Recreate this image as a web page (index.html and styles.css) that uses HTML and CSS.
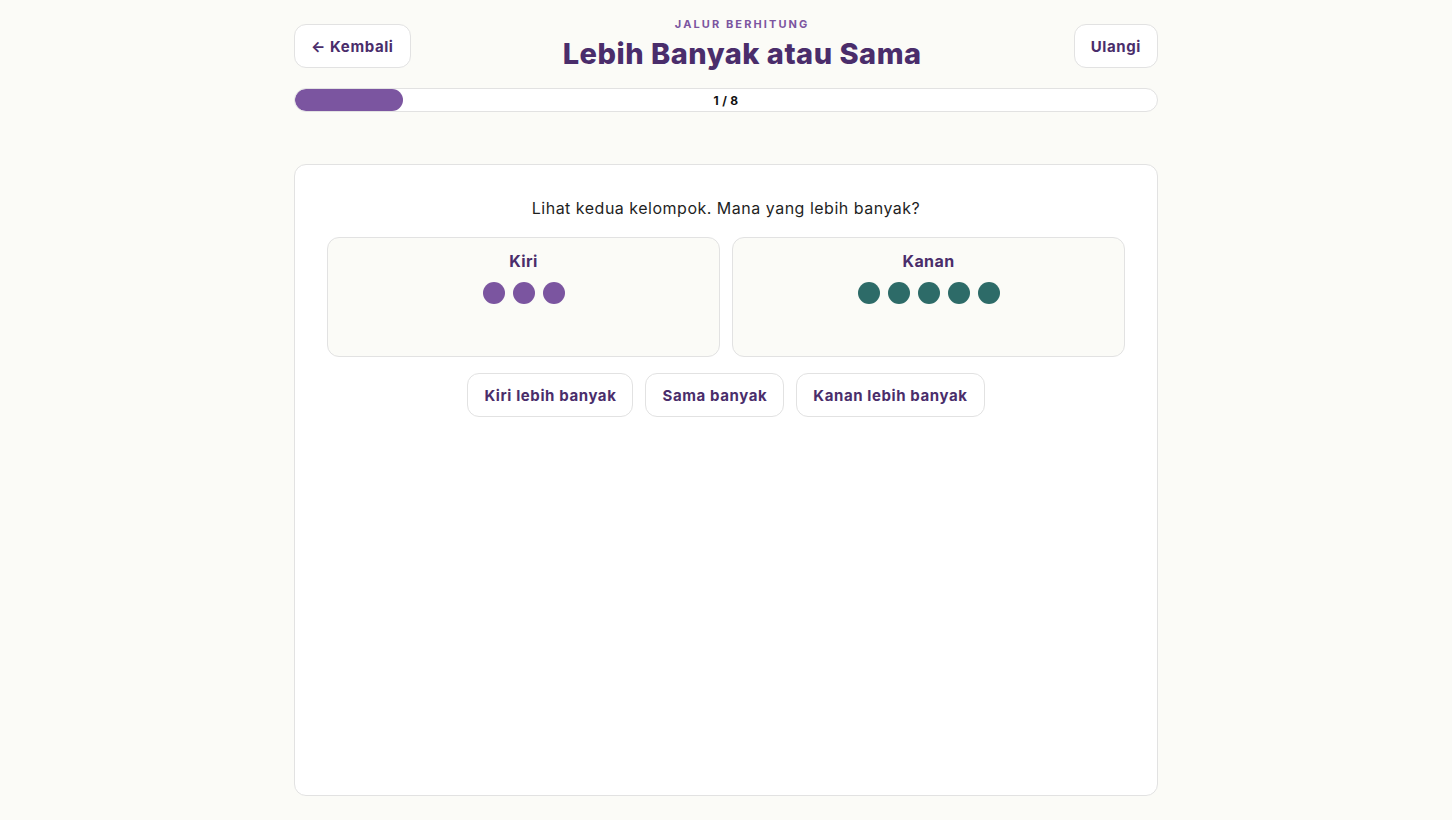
FILE: index.html
```html
<!DOCTYPE html>
<html lang="id">
<head>
<meta charset="utf-8">
<title>Lebih Banyak atau Sama</title>
<link rel="stylesheet" href="styles.css">
</head>
<body>
<div class="page">
  <header class="top">
    <button class="btn">← Kembali</button>
    <div class="heading">
      <div class="kicker">JALUR BERHITUNG</div>
      <h1 class="title">Lebih Banyak atau Sama</h1>
    </div>
    <button class="btn">Ulangi</button>
  </header>
  <div class="progress">
    <div class="progress-fill" style="width:12.5%"></div>
    <div class="progress-label">1 / 8</div>
  </div>
  <main class="card">
    <p class="prompt">Lihat kedua kelompok. Mana yang lebih banyak?</p>
    <div class="groups">
      <section class="group">
        <div class="group-title">Kiri</div>
        <div class="dots">
          <span class="dot purple"></span><span class="dot purple"></span><span class="dot purple"></span>
        </div>
      </section>
      <section class="group">
        <div class="group-title">Kanan</div>
        <div class="dots">
          <span class="dot teal"></span><span class="dot teal"></span><span class="dot teal"></span><span class="dot teal"></span><span class="dot teal"></span>
        </div>
      </section>
    </div>
    <div class="choices">
      <button class="btn">Kiri lebih banyak</button>
      <button class="btn">Sama banyak</button>
      <button class="btn">Kanan lebih banyak</button>
    </div>
  </main>
</div>
</body>
</html>
```

FILE: styles.css
```css
* { box-sizing: border-box; }
html, body { margin: 0; padding: 0; }
body {
  background: #fbfbf7;
  font-family: Inter, "Noto Sans", "DejaVu Sans", sans-serif;
  color: #1f1f1f;
}
.page {
  width: 864px;
  margin: 0 auto;
  padding-top: 16px;
}
.top {
  display: flex;
  justify-content: space-between;
  align-items: center;
}
.btn {
  font-family: inherit;
  font-size: 15px;
  font-weight: 700;
  letter-spacing: 0.6px;
  color: #4a2d6b;
  background: #fff;
  border: 1px solid #e2e2e2;
  border-radius: 12px;
  height: 44px;
  padding: 0 16px;
  cursor: pointer;
}
.heading {
  text-align: center;
}
.kicker {
  font-size: 11px;
  font-weight: 700;
  letter-spacing: 2.1px;
  color: #7b55a0;
  line-height: 16px;
}
.title {
  margin: 0;
  font-size: 29px;
  font-weight: 800;
  letter-spacing: 0.5px;
  color: #4a2d6b;
  line-height: 44px;
}
.progress {
  position: relative;
  margin-top: 12px;
  height: 24px;
  background: #fff;
  border: 1px solid #e2e2e2;
  border-radius: 12px;
  overflow: hidden;
}
.progress-fill {
  height: 100%;
  background: #7b55a0;
  border-radius: 12px;
}
.progress-label {
  position: absolute;
  inset: 0;
  display: flex;
  align-items: center;
  justify-content: center;
  font-size: 12px;
  font-weight: 700;
  letter-spacing: 0.3px;
  color: #111;
}
.card {
  margin-top: 52px;
  height: 632px;
  background: #fff;
  border: 1px solid #e2e2e2;
  border-radius: 12px;
  padding: 31px 32px;
}
.prompt {
  margin: 0;
  text-align: center;
  font-size: 16px;
  line-height: 24px;
  letter-spacing: 0.5px;
  color: #1f1f1f;
}
.groups {
  margin-top: 17px;
  display: grid;
  grid-template-columns: 1fr 1fr;
  gap: 12px;
}
.group {
  height: 120px;
  background: #fbfbf7;
  border: 1px solid #e2e2e2;
  border-radius: 12px;
  padding: 12px;
  text-align: center;
}
.group-title {
  font-size: 16px;
  font-weight: 700;
  letter-spacing: 0.4px;
  color: #4a2d6b;
  line-height: 22px;
}
.dots {
  margin-top: 10px;
  display: flex;
  justify-content: center;
  gap: 8px;
}
.dot {
  width: 22px;
  height: 22px;
  border-radius: 50%;
}
.purple { background: #7b55a0; }
.teal { background: #2d6b68; }
.choices {
  margin-top: 16px;
  display: flex;
  justify-content: center;
  gap: 12px;
}
```
